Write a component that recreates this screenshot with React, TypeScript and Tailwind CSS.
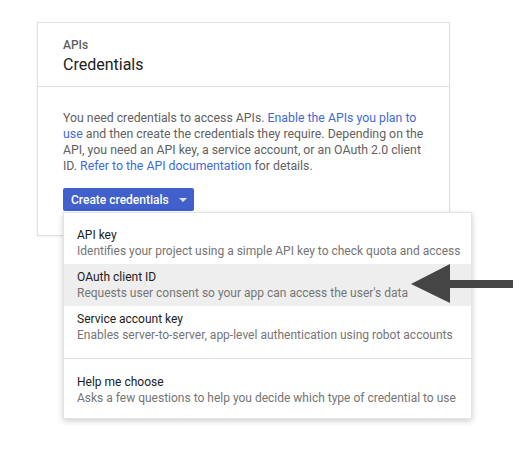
import React from 'react';

const font = { fontFamily: 'Roboto, "Liberation Sans", sans-serif' };

interface MenuItem {
  title: string;
  desc: string;
  active?: boolean;
}

const items: MenuItem[] = [
  { title: 'API key', desc: 'Identifies your project using a simple API key to check quota and access' },
  { title: 'OAuth client ID', desc: "Requests user consent so your app can access the user's data", active: true },
  { title: 'Service account key', desc: 'Enables server-to-server, app-level authentication using robot accounts' },
];

const Item: React.FC<MenuItem> = ({ title, desc, active }) => (
  <div className={`px-[13px] py-[5px] whitespace-nowrap ${active ? 'bg-[#eeeeee]' : ''}`}>
    <div className="text-[12px] leading-4 text-[#212121]">{title}</div>
    <div className="text-[12px] leading-4 text-[#757575]">{desc}</div>
  </div>
);

export default function App() {
  return (
    <div className="relative w-[519px] h-[460px] bg-white" style={font}>
      <div className="pl-[37px] pt-[22px]">
        <div className="w-[413px] border border-[#e0e0e0] bg-white shadow-[0_1px_2px_rgba(0,0,0,0.06)]">
          <div className="h-[64px] px-[25px] pt-[14px] border-b border-[#e0e0e0]">
            <div className="text-[12px] leading-4 font-medium text-[#616161]">APIs</div>
            <div className="text-[16px] leading-6 text-[#212121]">Credentials</div>
          </div>
          <div className="px-[25px] pt-[23px] pb-[24px]">
            <p className="text-[12.3px] leading-4 text-[#616161]">
              You need credentials to access APIs.{' '}
              <span className="text-[#3f6ad8]">Enable the APIs you plan to use</span> and then create the
              credentials they require. Depending on the API, you need an API key, a service account, or
              an OAuth 2.0 client ID. <span className="text-[#3f6ad8]">Refer to the API documentation</span>{' '}
              for details.
            </p>
            <button className="mt-[14px] h-[23px] w-[131px] flex items-center pl-[8px] gap-[10px] bg-[#4160cc] rounded-[2px] text-white text-[12px] font-medium whitespace-nowrap">
              Create credentials
              <svg width="8" height="4" viewBox="0 0 8 4">
                <path d="M0 0h8L4 4z" fill="#dfe6fb" />
              </svg>
            </button>
          </div>
        </div>
      </div>

      <div className="absolute left-[63px] top-[212px] w-[409px] bg-white border border-[#e4e4e4] shadow-[0_2px_6px_rgba(0,0,0,0.2)] pt-[9px] pb-[7px]">
        {items.map((it) => (
          <Item key={it.title} {...it} />
        ))}
        <div className="my-[10px] border-t border-[#e0e0e0]" />
        <Item title="Help me choose" desc="Asks a few questions to help you decide which type of credential to use" />
      </div>

      <svg className="absolute left-[405px] top-[260px]" width="114" height="48" viewBox="405 260 114 48">
        <path d="M411 284 L450 264 L450 280 L513 280 L513 288 L450 288 L450 303 Z" fill="#454545" />
      </svg>
    </div>
  );
}
